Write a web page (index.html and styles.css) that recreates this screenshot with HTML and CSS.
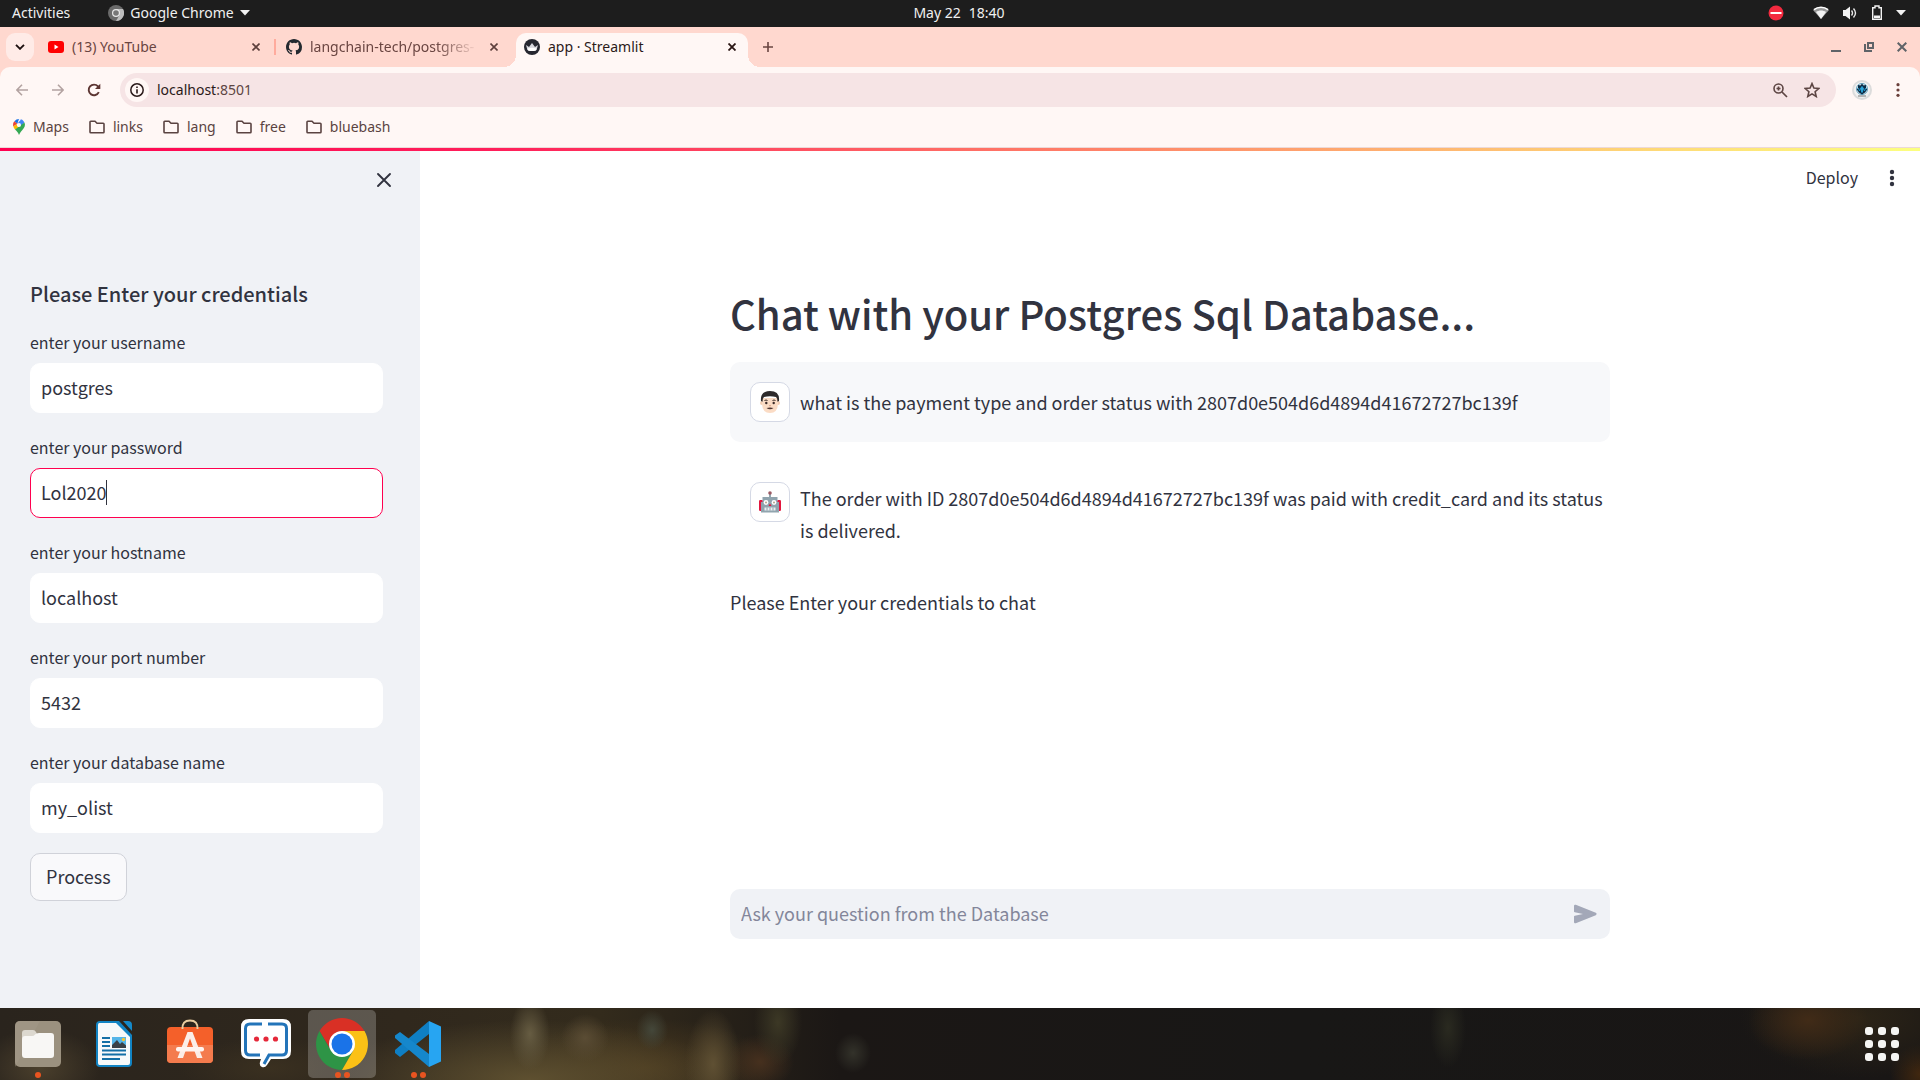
FILE: index.html
```html
<!DOCTYPE html>
<html lang="en">
<head>
<meta charset="utf-8">
<title>app · Streamlit</title>
<link rel="stylesheet" href="styles.css">
</head>
<body>
<div class="desktop">
  <header class="topbar">
    <div class="topbar-left">
      <button class="top-item">Activities</button>
      <button class="top-item top-app">
        <svg width="16" height="16" viewBox="0 0 16 16"><circle cx="8" cy="8" r="8" fill="#6b6b6b"/><path d="M8 4h7A8 8 0 0 1 8 16l3.500-6z" fill="#bdbdbd"/><circle cx="8" cy="8" r="4" fill="#e8e8e8"/><circle cx="8" cy="8" r="2.800" fill="#777"/></svg>
        <span>Google Chrome</span>
        <svg width="10" height="6" viewBox="0 0 10 6"><path d="M0 0h10L5 5.500z" fill="#f2f2f2"/></svg>
      </button>
    </div>
    <time class="clock"><span>May 22</span><span>18:40</span></time>
    <div class="topbar-right">
      <svg class="dnd" width="16" height="16" viewBox="0 0 16 16"><circle cx="8" cy="8" r="7.500" fill="#f32a3f"/><rect x="2.500" y="7" width="11" height="2" fill="#fff"/></svg>
      <svg width="16" height="16" viewBox="0 0 16 16"><path d="M0 5C4 1 12 1 16 5L8 14z" fill="#999"/><path d="M1 4.600C5 1.300 11 1.300 15 4.600" stroke="#fff" stroke-width="1.500" fill="none"/><path d="M3 7C6 5 10 5 13 7L8 14z" fill="#f2f2f2"/></svg>
      <svg width="16" height="16" viewBox="0 0 16 16"><path d="M1 5h2.500L8 1.500v13L3.500 11H1z" fill="#f2f2f2"/><path d="M9.500 5.500q2 2.500 0 5M11.500 3.500q4 4.500 0 9" stroke="#e8e8e8" stroke-width="1.400" fill="none"/></svg>
      <svg width="12" height="16" viewBox="0 0 12 16"><path d="M1.700 2.700H4V1h4v1.700h2.300v11.600H1.700z" stroke="#f2f2f2" stroke-width="1.400" fill="none"/><rect x="3" y="10.500" width="6" height="2.500" fill="#f2f2f2"/></svg>
      <svg width="10" height="6" viewBox="0 0 10 6"><path d="M0 0h10L5 5.500z" fill="#f2f2f2"/></svg>
    </div>
  </header>

  <nav class="tabstrip" aria-label="Tabs">
    <button class="tab-search" aria-label="Search tabs"><svg width="10" height="6" viewBox="0 0 10 6"><path d="M1 .8l4 4 4-4" stroke="#1d1010" stroke-width="1.900" fill="none"/></svg></button>
    <div class="tab">
      <svg width="16" height="16" viewBox="0 0 16 16"><rect y="2" width="16" height="12" rx="3" fill="#f00"/><path d="M6.500 5.500v5L10.500 8z" fill="#fff"/></svg>
      <span class="tab-title">(13) YouTube</span>
      <button class="tab-close" aria-label="Close tab"><svg width="8" height="8" viewBox="0 0 8 8"><path d="M.5.5l7 7M7.500.5l-7 7" stroke="#5d3f3c" stroke-width="1.600"/></svg></button>
    </div>
    <div class="tab tab-second">
      <svg width="16" height="16" viewBox="0 0 16 16"><path fill="#24292f" d="M8 0C3.580 0 0 3.580 0 8c0 3.540 2.290 6.530 5.470 7.590.4.070.55-.17.55-.38 0-.19-.010-.82-.010-1.490-2.010.37-2.530-.49-2.690-.94-.09-.23-.48-.94-.82-1.130-.28-.15-.68-.52-.010-.53.63-.010 1.080.58 1.230.82.72 1.210 1.870.87 2.330.66.070-.52.28-.87.51-1.070-1.780-.2-3.640-.89-3.640-3.950 0-.87.31-1.590.82-2.150-.08-.2-.36-1.020.08-2.120 0 0 .67-.21 2.200.82a7.600 7.600 0 0 1 4 0c1.530-1.040 2.200-.82 2.200-.82.44 1.100.16 1.920.08 2.120.51.56.82 1.270.82 2.150 0 3.070-1.870 3.750-3.650 3.950.29.25.54.73.54 1.480 0 1.070-.010 1.930-.010 2.200 0 .21.15.46.55.38A8 8 0 0 0 16 8c0-4.420-3.580-8-8-8z"/></svg>
      <span class="tab-title fade">langchain-tech/postgres-</span>
      <button class="tab-close" aria-label="Close tab"><svg width="8" height="8" viewBox="0 0 8 8"><path d="M.5.5l7 7M7.500.5l-7 7" stroke="#5d3f3c" stroke-width="1.600"/></svg></button>
    </div>
    <div class="tab tab-active">
      <svg width="16" height="16" viewBox="0 0 16 16"><circle cx="8" cy="8" r="8" fill="#262730"/><path d="M2 6l3 2 3-4 3 4 3-2-1.500 5q-4.500 2-9 0z" fill="#d8d8de"/><path d="M3.500 9.500q4.500-1.500 9 0L12 11.500q-4 1.200-8 0z" fill="#fff"/></svg>
      <span class="tab-title">app · Streamlit</span>
      <button class="tab-close" aria-label="Close tab"><svg width="8" height="8" viewBox="0 0 8 8"><path d="M.5.5l7 7M7.500.5l-7 7" stroke="#2a1614" stroke-width="1.800"/></svg></button>
    </div>
    <button class="new-tab" aria-label="New tab"><svg width="10" height="10" viewBox="0 0 10 10"><path d="M5 0v10M0 5h10" stroke="#6a4541" stroke-width="1.600"/></svg></button>
    <div class="window-buttons">
      <button aria-label="Minimize"><svg width="10" height="10" viewBox="0 0 10 10"><path d="M0 9h10" stroke="#5f6368" stroke-width="2"/></svg></button>
      <button aria-label="Restore"><svg width="10" height="10" viewBox="0 0 10 10"><path d="M4 1h5v5H4zM1 2v7h7" stroke="#5f6368" stroke-width="2" fill="none"/></svg></button>
      <button aria-label="Close window"><svg width="10" height="10" viewBox="0 0 10 10"><path d="M.7.7l8.600 8.600M9.300.7L.7 9.300" stroke="#5f6368" stroke-width="2"/></svg></button>
    </div>
  </nav>

  <div class="chrome-panel">
    <div class="toolbar">
      <button class="tool" aria-label="Back"><svg width="12" height="12" viewBox="0 0 12 12"><path d="M12 6H1M6 .8L.9 6 6 11.200" stroke="#b3a3a1" stroke-width="1.600" fill="none"/></svg></button>
      <button class="tool" aria-label="Forward"><svg width="12" height="12" viewBox="0 0 12 12"><path d="M0 6h11M6 .8L11.100 6 6 11.200" stroke="#b3a3a1" stroke-width="1.600" fill="none"/></svg></button>
      <button class="tool" aria-label="Reload"><svg width="14" height="14" viewBox="0 0 14 14"><path d="M11.800 9.200A5.300 5.300 0 1 1 11 3.400L12.500 5" stroke="#5c3532" stroke-width="1.900" fill="none"/><path d="M13.300.8V6H8z" fill="#5c3532"/></svg></button>
      <form class="omnibox">
        <span class="site-info"><svg width="14" height="14" viewBox="0 0 14 14"><circle cx="7" cy="7" r="6.200" stroke="#2a1a1a" stroke-width="1.500" fill="none"/><path d="M7 6.200v4.200M7 3.500v1.600" stroke="#2a1a1a" stroke-width="1.600"/></svg></span>
        <a class="address" href="#">localhost<span>:8501</span></a>
        <button type="button" class="omni-btn" aria-label="Zoom"><svg width="15" height="15" viewBox="0 0 15 15"><circle cx="5.500" cy="5.500" r="4.500" stroke="#5d4543" stroke-width="1.600" fill="none"/><path d="M9 9l5 5M5.500 3.500v4M3.500 5.500h4" stroke="#5d4543" stroke-width="1.700"/></svg></button>
        <button type="button" class="omni-btn" aria-label="Bookmark this tab"><svg width="16" height="16" viewBox="0 0 16 16"><path d="M8 1.600l1.900 4.500 4.900.4-3.700 3.200 1.100 4.800L8 11.900l-4.200 2.600 1.100-4.800L1.200 6.500l4.900-.4z" stroke="#5d4543" stroke-width="1.600" fill="none"/></svg></button>
      </form>
      <button class="tool profile" aria-label="Profile"><svg width="20" height="20" viewBox="0 0 20 20"><circle cx="10" cy="10" r="10" fill="#dcdcdc"/><circle cx="10" cy="10" r="8" fill="#f1f1f1"/><circle cx="10" cy="9" r="5.600" stroke="#6fa9c4" stroke-width="1" fill="#cfe3ec"/><path d="M10 3.500l1.500 2L14 5v3l1.200 1.500-2.200 3-3 2-3-2-2.200-3L6 8V5l2.500.5z" fill="#0b2a44"/><path d="M10 6.500l1.500 2-1.500 4-1.500-4zM6.500 8l1 3M13.500 8l-1 3" stroke="#2aa7dc" stroke-width="1" fill="#2aa7dc"/><path d="M6 16h8" stroke="#777"/></svg></button>
      <button class="tool" aria-label="Menu"><svg width="4" height="14" viewBox="0 0 4 14"><g fill="#6a3f3a"><circle cx="2" cy="1.700" r="1.600"/><circle cx="2" cy="7" r="1.600"/><circle cx="2" cy="12.300" r="1.600"/></g></svg></button>
    </div>
    <nav class="bookmarks" aria-label="Bookmarks">
      <a href="#"><svg width="12" height="16" viewBox="0 0 12 16"><path d="M6 0A6 6 0 0 0 1.400 2.200L4.300 4.700z" fill="#1a73e8"/><path d="M6 0a6 6 0 0 1 5.400 3.400L7.500 7.500 4.300 4.700 8 .4z" fill="#4285f4"/><path d="M1.400 2.200C.2 3.500-.3 5.500.3 7.500l4-2.800z" fill="#ea4335"/><path d="M.3 7.500c.3 1.200 1 2.100 1.700 3L7.500 7.500A2.300 2.300 0 0 1 4 4.900z" fill="#fbbc04"/><path d="M11.400 3.400c1 2.200.6 4.200-.9 6.100C8.500 12 7.500 13 6 16 5 13 4 12.500 2 10.500z" fill="#34a853"/><circle cx="6" cy="6" r="2" fill="#fff7f5"/></svg>Maps</a>
      <a href="#"><svg width="16" height="14" viewBox="0 0 16 14"><path class="folder" d="M1 2.500V12q0 .8.800.8h12.400q.8 0 .8-.8V4q0-.8-.8-.8H8L6 1.200H1.800Q1 1.200 1 2z"/></svg>links</a>
      <a href="#"><svg width="16" height="14" viewBox="0 0 16 14"><path class="folder" d="M1 2.500V12q0 .8.800.8h12.400q.8 0 .8-.8V4q0-.8-.8-.8H8L6 1.200H1.800Q1 1.200 1 2z"/></svg>lang</a>
      <a href="#"><svg width="16" height="14" viewBox="0 0 16 14"><path class="folder" d="M1 2.500V12q0 .8.800.8h12.400q.8 0 .8-.8V4q0-.8-.8-.8H8L6 1.200H1.800Q1 1.200 1 2z"/></svg>free</a>
      <a href="#"><svg width="16" height="14" viewBox="0 0 16 14"><path class="folder" d="M1 2.500V12q0 .8.800.8h12.400q.8 0 .8-.8V4q0-.8-.8-.8H8L6 1.200H1.800Q1 1.200 1 2z"/></svg>bluebash</a>
    </nav>
  </div>

  <div class="decoration"></div>

  <div class="app">
    <aside class="sidebar">
      <div class="sidebar-top">
        <button class="icon-btn" aria-label="Close sidebar"><svg width="16" height="16" viewBox="0 0 16 16"><path d="M2 2l12 12M14 2L2 14" stroke="#31333f" stroke-width="1.900" stroke-linecap="round"/></svg></button>
      </div>
      <form class="credentials">
        <h2>Please Enter your credentials</h2>
        <div class="field"><label for="user">enter your username</label><input id="user" type="text" value="postgres"></div>
        <div class="field field-focused"><label for="pass">enter your password</label><input id="pass" type="text" value="Lol2020"><i class="caret"></i></div>
        <div class="field"><label for="host">enter your hostname</label><input id="host" type="text" value="localhost"></div>
        <div class="field"><label for="port">enter your port number</label><input id="port" type="text" value="5432"></div>
        <div class="field"><label for="db">enter your database name</label><input id="db" type="text" value="my_olist"></div>
        <button type="button" class="process">Process</button>
      </form>
    </aside>

    <main class="main">
      <div class="app-header">
        <button class="deploy">Deploy</button>
        <button class="icon-btn" aria-label="Main menu"><svg width="6" height="18" viewBox="0 0 6 18"><g fill="#31333f"><circle cx="3" cy="3" r="2.200"/><circle cx="3" cy="9" r="2.200"/><circle cx="3" cy="15" r="2.200"/></g></svg></button>
      </div>
      <div class="column">
        <h1>Chat with your Postgres Sql Database...</h1>
        <article class="message message-user">
          <span class="avatar"><svg width="22" height="24" viewBox="0 0 22 24"><circle cx="3" cy="13" r="2" fill="#f4cfb4"/><circle cx="19" cy="13" r="2" fill="#f4cfb4"/><path d="M3 8h16v6q-.5 9-8 9t-8-9z" fill="#fbdcc5"/><path d="M2 11Q1 1 11 1t9 10l-1.500.8Q18.500 8 17 7q-6-1.500-12 0-1.500 1-1.500 4.800z" fill="#2d2a2b"/><path d="M5.500 10.500q1.500-1 3 0M13.500 10.500q1.500-1 3 0" stroke="#3a2b26" fill="none"/><circle cx="7.300" cy="13" r="1.200" fill="#3c2b28"/><circle cx="14.700" cy="13" r="1.200" fill="#3c2b28"/><path d="M10 15.500q1 .8 2 0" stroke="#d9a58a" fill="none"/><path d="M7.500 18q3.500 2.500 7 0-3.500-1-7 0z" fill="#4e3430"/></svg></span>
          <p>what is the payment type and order status with 2807d0e504d6d4894d41672727bc139f</p>
        </article>
        <article class="message">
          <span class="avatar"><svg width="24" height="24" viewBox="0 0 24 24"><path d="M12 3v5" stroke="#78909c" stroke-width="1.600"/><circle cx="12" cy="3" r="1.800" fill="#9c5a63"/><rect x="1" y="10" width="4" height="11" rx="1.200" fill="#e3163e"/><rect x="19" y="10" width="4" height="11" rx="1.200" fill="#e3163e"/><path d="M4.500 7h15v5h1.500v10.500H3V12h1.500z" fill="#90a4ae"/><circle cx="8" cy="12.500" r="2.400" fill="#fff"/><circle cx="16" cy="12.500" r="2.400" fill="#fff"/><circle cx="8" cy="12.500" r="1" fill="#b5a58c"/><circle cx="16" cy="12.500" r="1" fill="#b5a58c"/><path d="M12 13.500l1.500 2.500h-3z" fill="#e3163e"/><rect x="6.500" y="17.500" width="11" height="3" fill="#eceff1"/><path d="M9 17.500v3M12 17.500v3M15 17.500v3" stroke="#78909c" stroke-width=".8"/></svg></span>
          <p>The order with ID 2807d0e504d6d4894d41672727bc139f was paid with credit_card and its status is delivered.</p>
        </article>
        <p class="notice">Please Enter your credentials to chat</p>
      </div>
      <form class="chat-input">
        <input type="text" aria-label="Chat question" placeholder="Ask your question from the Database">
        <button type="button" aria-label="Send"><svg width="24" height="20" viewBox="0 0 24 20"><path d="M1 2Q1 .2 2.800.8l20 8q1.600 1.200 0 2.400l-20 8Q1 19.800 1 18v-5.500Q1 12 1.800 11.800L10 10 1.800 8.200Q1 8 1 7.500z" fill="#a3a8b8"/></svg></button>
      </form>
    </main>
  </div>

  <footer class="dock">
    <button class="dock-app" aria-label="Files"><svg width="46" height="46" viewBox="0 0 46 46"><rect width="46" height="46" rx="5" fill="#9b917f"/><path d="M0 46V5q0-5 5-5h20z" fill="#a39a8a" opacity=".5"/><path d="M7 12q0-3 3-3h8q2 0 3 2l1 2q1 1 3 1v14H7z" fill="#dcd8cf"/><path d="M7 19q0-4 3-4h7q2 0 3-1.500Q21 12 24 12h12q3 0 3 3v19q0 3-3 3H10q-3 0-3-3z" fill="#f8f7f5"/></svg><span class="dots"><i></i></span></button>
    <button class="dock-app" aria-label="Writer"><svg width="46" height="46" viewBox="0 0 46 46"><path d="M9 0h19l13 14v28q0 4-4 4H9q-4 0-4-4V4q0-4 4-4z" fill="#1284c4"/><path d="M32 0h5q4 0 4 4v6z" fill="#1589c9"/><path d="M8.500 2H25l14 14v26q0 2-2 2H8.500Q7 44 7 42V4q0-2 1.500-2z" fill="#f7f9fa"/><path d="M11 17h8M11 21h8M11 25h8M11 29.500h24M11 33.500h24M11 38h18" stroke="#146fa6" stroke-width="1.800"/><rect x="21" y="16" width="14" height="11" fill="#55b5e8"/><path d="M21 27v-3l5-5 3 4 2-2 4 3.500V27z" fill="#3a4046"/><circle cx="32.500" cy="18.500" r="1.700" fill="#f4c434"/></svg></button>
    <button class="dock-app" aria-label="Software"><svg width="46" height="50" viewBox="0 0 46 50"><rect y="8" width="46" height="36" rx="4" fill="#f4602a"/><path d="M0 26h46v14q0 4-4 4H4q-4 0-4-4z" fill="#f47b4d"/><path d="M15.500 10Q15 1.500 23 1.500T30.500 10" stroke="#e9cda0" stroke-width="2" fill="none"/><path d="M20.500 13h5L35.500 39H30L23 19.500 16 39h-5.500z" fill="#fbeee8"/><rect x="9" y="28" width="28" height="4.500" rx="2" fill="#fff4ef"/></svg></button>
    <button class="dock-app" aria-label="Chat"><svg width="50" height="50" viewBox="0 0 50 50"><path d="M8 0h34q8 0 8 8v24q0 8-8 8H30l-4 6q-2 3-5 2t-2-5l1-3H8q-8 0-8-8V8q0-8 8-8z" fill="#fff"/><path d="M21 5H9Q4.500 5 4.500 9.500v22Q4.500 36 9 36h10M27 5h14q4.500 0 4.500 4.500v22Q45.500 36 41 36H28l-5 9" stroke="#2374b9" stroke-width="3" fill="none"/><g fill="#e5283a"><circle cx="15.500" cy="20" r="2.600"/><circle cx="25" cy="20" r="2.600"/><circle cx="34.500" cy="20" r="2.600"/></g></svg></button>
    <button class="dock-app dock-active" aria-label="Google Chrome"><svg width="52" height="52" viewBox="0 0 52 52"><path d="M3.500 13A26 26 0 0 1 48.500 13H26L15 32z" fill="#d93025"/><path d="M3.500 13A26 26 0 0 0 26 52l11.200-19.500H14.700z" fill="#2e9446"/><path d="M48.500 13A26 26 0 0 1 26 52l11.300-19.500L26 13z" fill="#fbc116"/><circle cx="26" cy="26" r="13" fill="#fff"/><circle cx="26" cy="26" r="10.500" fill="#1a73e8"/></svg><span class="dots"><i></i><i></i></span></button>
    <button class="dock-app" aria-label="Visual Studio Code"><svg width="46" height="46" viewBox="0 0 46 46"><path d="M34 0v13L5 36 0 32v-3z" fill="#0f7fc4"/><path d="M34 46V33L5 11 0 14.500v2.500z" fill="#1587cc"/><path d="M34 0l12 5.500v35L34 46z" fill="#27a5f2"/></svg><span class="dots"><i></i><i></i></span></button>
    <button class="dock-app dock-grid" aria-label="Show applications"><svg width="34" height="34" viewBox="0 0 34 34"><g fill="#f5f5f3"><rect width="8" height="8" rx="3"/><rect x="13" width="8" height="8" rx="3"/><rect x="26" width="8" height="8" rx="3"/><rect y="13" width="8" height="8" rx="3"/><rect x="13" y="13" width="8" height="8" rx="3"/><rect x="26" y="13" width="8" height="8" rx="3"/><rect y="26" width="8" height="8" rx="3"/><rect x="13" y="26" width="8" height="8" rx="3"/><rect x="26" y="26" width="8" height="8" rx="3"/></g></svg></button>
  </footer>
</div>
</body>
</html>
```
FILE: styles.css
```css
* { box-sizing: border-box; }

body {
  margin: 0;
  color: #31333f;
  font-family: "Noto Sans CJK SC", "Noto Sans", sans-serif;
  font-size: 18px;
  line-height: 32px;
}

button, input { font: inherit; color: inherit; margin: 0; }
button { display: flex; align-items: center; justify-content: center; padding: 0; border: 0; background: none; }
a { color: inherit; text-decoration: none; }
p, h1, h2 { margin: 0; }
svg { display: block; flex: none; }

.desktop { display: flex; flex-direction: column; min-height: 100vh; }

/* system bar */
.topbar, .tabstrip, .chrome-panel { font-family: "Noto Sans", sans-serif; font-size: 14px; line-height: 20px; }
.topbar {
  display: grid;
  grid-template-columns: 1fr auto 1fr;
  align-items: center;
  height: 27px;
  padding: 0 14px 2px 12px;
  background: #1d1d1d;
  color: #f0f0f0;
}
.topbar-left { display: flex; gap: 38px; }
.top-app { gap: 6px; }
.clock { display: flex; gap: 8px; }
.topbar-right { display: flex; align-items: center; justify-content: flex-end; gap: 13px; }
.dnd { margin-right: 16px; }

/* browser tabs */
.tabstrip { display: flex; align-items: center; height: 40px; padding-left: 6px; background: #ffd8cf; color: #6a4541; }
.tab-search { width: 28px; height: 28px; border-radius: 9px; background: #ffebe7; }
.tab { position: relative; display: flex; align-items: center; gap: 8px; width: 240px; height: 28px; padding: 0 10px 0 14px; }
.tab-title { flex: 1; min-width: 0; white-space: nowrap; }
.tab-close { width: 16px; height: 16px; }
.fade { -webkit-mask-image: linear-gradient(90deg, #000 75%, transparent); mask-image: linear-gradient(90deg, #000 75%, transparent); }
.tab-second { width: 242px; padding: 0 14px 0 12px; }
.tab-second::before { content: ""; position: absolute; left: 0; top: 6px; width: 2px; height: 16px; background: #ffab9d; }
.tab-active { align-self: flex-end; width: 232px; height: 34px; padding: 0 8px 6px; border-radius: 10px 10px 0 0; background: #fff7f5; color: #2b1a19; }
.tab-active::before, .tab-active::after { content: ""; position: absolute; bottom: 0; width: 12px; height: 12px; }
.tab-active::before { right: 100%; background: radial-gradient(circle at 0 0, #ffd8cf 12px, #fff7f5 12px); }
.tab-active::after { left: 100%; background: radial-gradient(circle at 100% 0, #ffd8cf 12px, #fff7f5 12px); }
.new-tab { width: 28px; height: 28px; margin-left: 6px; }
.window-buttons { display: flex; gap: 23px; margin-left: auto; padding-right: 13px; }

/* toolbar and bookmarks */
.chrome-panel { background: linear-gradient(#ffd8cf, #ffd8cf 10px, transparent 10px), #fff7f5; border-bottom: 1px solid #ecd9d8; }
.toolbar { display: flex; align-items: center; height: 46px; padding: 0 10px; border-radius: 10px 10px 0 0; background: #fff7f5; }
.tool { width: 24px; height: 24px; margin-right: 12px; }
.tool:last-child { margin-right: 0; }
.omnibox { display: flex; flex: 1; align-items: center; height: 34px; padding: 0 14px 0 5px; margin-right: 14px; margin-left: 2px; border-radius: 17px; background: #f6e4e5; }
.site-info { display: grid; place-items: center; width: 24px; height: 24px; margin-right: 8px; border-radius: 50%; background: #fff7f5; }
.address { flex: 1; color: #2b1a19; }
.address span { color: #5d4543; }
.omni-btn { width: 20px; height: 20px; margin-left: 12px; }
.profile { margin-right: 12px; }
.bookmarks { display: flex; gap: 20px; align-items: center; height: 34px; padding: 0 13px 6px; color: #5a4341; }
.bookmarks a { display: flex; align-items: center; gap: 8px; }
.folder { fill: none; stroke: #5a4341; stroke-width: 1.600; }

/* web page */
.decoration { height: 3px; background: linear-gradient(90deg, #ff0050, #ff1f5a 26%, #ff7566 53%, #fede78 88%, #fcff80); }
.app { display: flex; flex: 1; }
.sidebar { flex: none; width: 420px; background: #f0f2f6; }
.sidebar-top { display: flex; justify-content: flex-end; padding: 15px 22px 0; }
.icon-btn { width: 28px; height: 28px; }
.credentials { display: flex; flex-direction: column; align-items: flex-start; gap: 20px; padding: 84px 37px 40px 30px; }
.credentials h2 { padding-top: 2px; font-size: 20px; font-weight: 500; line-height: 28px; }
.field { position: relative; display: flex; flex-direction: column; width: 100%; }
.field label { height: 35px; font-size: 16px; line-height: 28px; }
.field input { width: 100%; height: 50px; padding: 0 10px 2px; border: 1px solid #fff; border-radius: 10px; background: #fff; outline: 0; }
.field-focused input { border-color: #ff004f; }
.caret { position: absolute; left: 76px; bottom: 13px; width: 1px; height: 25px; background: #31333f; }
.process { height: 48px; padding: 0 15px 2px; border: 1px solid #d0d2d9; border-radius: 10px; background: #f9f9fb; }

.main { display: flex; flex: 1; flex-direction: column; min-width: 0; padding: 0 20px 69px; background: #fff; }
.app-header { display: flex; justify-content: flex-end; gap: 20px; height: 54px; align-items: center; margin-right: -6px; }
.deploy { padding-bottom: 2px; font-size: 16px; }
.column { display: flex; flex: 1; flex-direction: column; gap: 20px; width: 100%; max-width: 880px; margin: 0 auto; padding-top: 79px; }
h1 { font-size: 40px; font-weight: 500; line-height: 58px; }
.message { display: flex; gap: 10px; padding: 20px 6px 20px 20px; border-radius: 10px; }
.message-user { align-items: center; background: #f7f8fa; }
.avatar { display: grid; flex: none; place-items: center; width: 40px; height: 40px; border: 1px solid #d5d9e5; border-radius: 10px; background: #fff; }
.message p { flex: 1; }
.chat-input { display: flex; width: 100%; max-width: 880px; height: 50px; margin: 0 auto; padding: 0 13px 0 0; border-radius: 10px; background: #f0f2f6; }
.chat-input input { flex: 1; padding: 0 11px 2px; border: 0; background: none; outline: 0; }
.chat-input input::placeholder { color: #83869a; opacity: 1; }

/* dock */
.dock {
  display: flex;
  align-items: center;
  gap: 8px;
  height: 72px;
  padding: 0 4px;
  background:
    radial-gradient(ellipse 20px 36px at 530px 26px, #665c42, transparent),
    radial-gradient(ellipse 24px 24px at 585px 30px, #5a4c34, transparent),
    radial-gradient(ellipse 16px 20px at 652px 22px, #44473a, transparent),
    radial-gradient(ellipse 28px 55px at 713px 56px, #5f5033, transparent),
    radial-gradient(ellipse 24px 44px at 778px 14px, #3c3825, transparent),
    radial-gradient(ellipse 34px 28px at 760px 54px, #46301e, transparent),
    radial-gradient(ellipse 18px 20px at 853px 45px, #33322a, transparent),
    radial-gradient(ellipse 200px 60px at 530px 72px, #5e5030, transparent),
    radial-gradient(ellipse 130px 50px at 645px 60px, #49391f, transparent),
    radial-gradient(ellipse 18px 40px at 1448px 20px, #2a2a20, transparent),
    radial-gradient(ellipse 60px 40px at 1808px 12px, #412b17, transparent),
    radial-gradient(ellipse 120px 60px at 1860px 10px, #2c2417, transparent),
    radial-gradient(ellipse 30px 30px at 1920px 66px, #40270f, transparent),
    radial-gradient(ellipse 60px 40px at 40px 60px, #4a3f2c, transparent),
    radial-gradient(ellipse 90px 30px at 270px 60px, #3a3020, transparent),
    linear-gradient(90deg, #2a241d, #30281d 400px, #332b1c 600px, #1b1715 840px, #181716 1300px, #191615);
}
.dock-app { position: relative; width: 68px; height: 68px; border-radius: 5px; }
.dock-active { background: rgb(255 255 255 / 22%); }
.dock-grid { margin-left: auto; }
.dots { position: absolute; inset: auto 0 0; display: flex; justify-content: center; gap: 3px; }
.dots i { width: 6px; height: 6px; border-radius: 50%; background: #e95420; }
```
